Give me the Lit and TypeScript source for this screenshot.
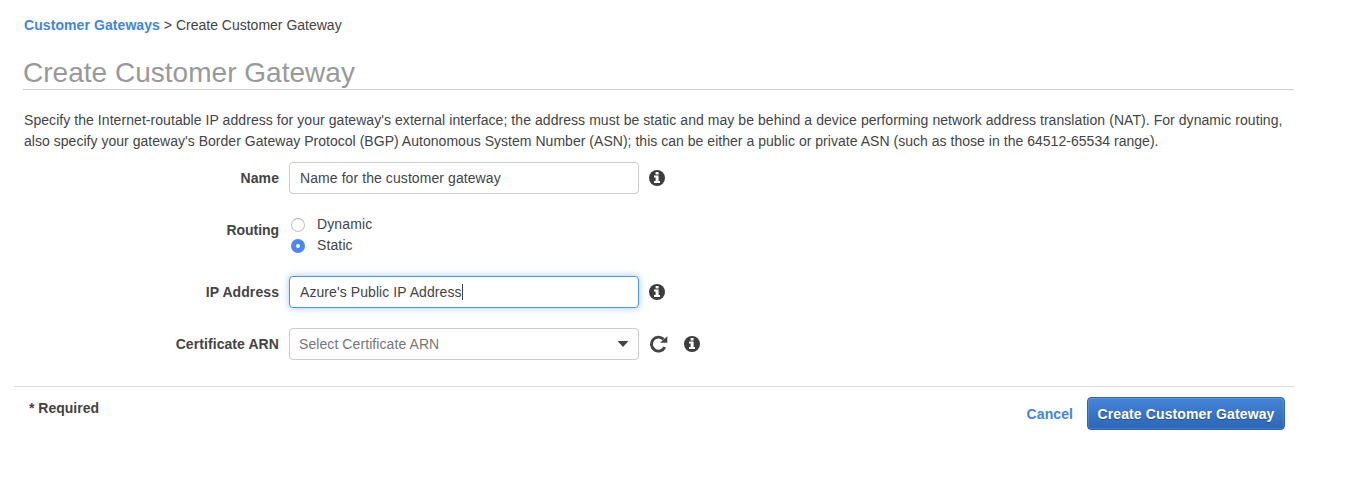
import { LitElement, html, css } from "lit";
import { customElement, property } from "lit/decorators.js";

@customElement("info-icon")
class InfoIcon extends LitElement {
  static styles = css`
    :host { display: block; width: 16px; height: 16px; }
    svg { display: block; }
  `;
  render() {
    return html`<svg width="16" height="16" viewBox="0 0 16 16">
      <circle cx="8" cy="8" r="8" fill="#3d3d3d" />
      <path d="M6.6 2h3v2.4h-3zM5 5.6h4.6v5.5H11V13H5v-1.9h1.6V7.5H5z" fill="#fff" />
    </svg>`;
  }
}

@customElement("form-row")
class FormRow extends LitElement {
  @property() label = "";
  static styles = css`
    :host { display: flex; align-items: center; height: 32px; }
    .label { box-sizing: border-box; width: 275px; padding-right: 10px; text-align: right; font-weight: 700; letter-spacing: 0.08px; }
    .content { display: flex; align-items: center; }
    :host(.routing) .label { padding-bottom: 10px; letter-spacing: -0.06px; }
  `;
  render() {
    return html`<div class="label">${this.label}</div><div class="content"><slot></slot></div>`;
  }
}

@customElement("app-root")
class AppRoot extends LitElement {
  static styles = css`
    :host {
      display: block; box-sizing: border-box; height: 480px; background: #fff; color: #444;
      padding: 15px 63px 0 14px; overflow: hidden;
      font: 14px/21px "Liberation Sans", Arial, sans-serif;
    }
    a { color: #4285dd; font-weight: 700; text-decoration: none; }
    .crumbs { padding-left: 10px; white-space: pre; }
    .t1 { letter-spacing: 0.08px; }
    h1 {
      margin: 18px 0 0 9px; height: 35px; border-bottom: 1px solid #ccc;
      font-size: 28px; letter-spacing: 0.02px; line-height: 38px; font-weight: 400; color: #999; white-space: nowrap;
    }
    .intro { margin: 20px 0 10px 10px; white-space: nowrap; }
    .line { display: block; width: max-content; }
    .l1 { letter-spacing: 0.06px; }
    .l2 { letter-spacing: 0.029px; }
    .box {
      box-sizing: border-box; width: 350px; height: 32px; border: 1px solid #ccc; border-radius: 4px;
      padding: 0 10px; display: flex; align-items: center; background: #fff; letter-spacing: 0.08px;
    }
    .focus { border-color: #5292e8; box-shadow: 0 0 7px rgba(82, 146, 232, 0.5); }
    .caret { width: 1px; height: 16px; background: #444; }
    .select { padding: 0 9px; justify-content: space-between; color: #777; }
    info-icon { margin-left: 10px; }
    .reload { margin: 0 6px 0 11px; display: block; }
    .routing { height: 42px; margin: 20px 0; }
    .radios { display: block; margin-left: 2px; letter-spacing: 0.12px; }
    .radio { display: flex; align-items: center; height: 21px; }
    .dot { box-sizing: border-box; width: 14px; height: 14px; border: 1px solid #c4c4c4; border-top-color: #aaa; border-radius: 50%; margin: 1px 12px 0 0; }
    .on { border: 5px solid #4a87f5; background: #fff; }
    .cert { margin-top: 20px; }
    .footer { margin-top: 26px; border-top: 1px solid #ddd; display: flex; align-items: flex-start; }
    .required { margin: 11px auto 0 15px; font-weight: 700; }
    .cancel { margin: 17px 14px 0 0; letter-spacing: 0.08px; }
    .create {
      box-sizing: border-box; width: 198px; height: 33px; margin: 10px 9px 0 0; padding: 1px 0 0;
      border: 1px solid #2e63ae; border-radius: 4px; background: linear-gradient(#4685d8, #2c65b6);
      box-shadow: inset 0 0 0 1px rgba(255, 255, 255, 0.12); letter-spacing: 0.12px;
      color: #fff; font: inherit; font-weight: 700; text-shadow: 0 1px 1px rgba(0, 0, 0, 0.3); white-space: nowrap;
    }
  `;
  render() {
    return html`
      <nav class="crumbs"><a class="t1">Customer Gateways</a><span> &gt; Create Customer Gateway</span></nav>
      <h1>Create Customer Gateway</h1>
      <div class="intro">
        <span class="line l1">Specify the Internet-routable IP address for your gateway's external interface; the address must be static and may be behind a device performing network address translation (NAT). For dynamic routing,</span>
        <span class="line l2">also specify your gateway's Border Gateway Protocol (BGP) Autonomous System Number (ASN); this can be either a public or private ASN (such as those in the 64512-65534 range).</span>
      </div>
      <form-row label="Name">
        <div class="box">Name for the customer gateway</div>
        <info-icon></info-icon>
      </form-row>
      <form-row class="routing" label="Routing">
        <div class="radios">
          <div class="radio"><span class="dot"></span><span>Dynamic</span></div>
          <div class="radio"><span class="dot on"></span><span>Static</span></div>
        </div>
      </form-row>
      <form-row label="IP Address">
        <div class="box focus"><span>Azure's Public IP Address</span><span class="caret"></span></div>
        <info-icon></info-icon>
      </form-row>
      <form-row class="cert" label="Certificate ARN">
        <div class="box select"><span>Select Certificate ARN</span>
          <svg width="12" height="6" viewBox="0 0 12 6"><path d="M.5 0h11L6 6z" fill="#444" /></svg></div>
        <svg class="reload" width="18" height="18" viewBox="0 0 18 18">
          <path d="M13.6 4.3A7 7 0 1 0 14.8 12.2" fill="none" stroke="#444" stroke-width="2.9" />
          <path d="M17.3 1.2v6.5h-7.3z" fill="#444" />
        </svg>
        <info-icon></info-icon>
      </form-row>
      <div class="footer">
        <span class="required">* Required</span>
        <a class="cancel">Cancel</a>
        <button class="create">Create Customer Gateway</button>
      </div>
    `;
  }
}
